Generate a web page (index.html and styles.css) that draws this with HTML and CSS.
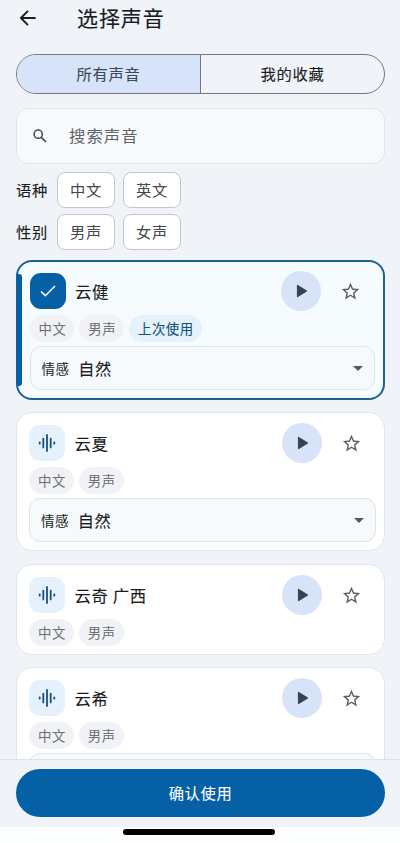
FILE: index.html
```html
<!DOCTYPE html>
<html lang="zh-CN">
<head>
<meta charset="utf-8">
<meta name="viewport" content="width=device-width, initial-scale=1">
<title>选择声音</title>
<link rel="stylesheet" href="styles.css">
</head>
<body>
<svg class="defs" aria-hidden="true">
  <symbol id="wave" viewBox="0 0 18 18"><path d="M1.7 8.3v1.4M5.3 4.6v8.8M9 1v16M12.7 4.6v8.8M16.3 8.3v1.4" fill="none" stroke="currentColor" stroke-width="1.8" stroke-linecap="round"/></symbol>
  <symbol id="play" viewBox="0 0 12 14"><path d="M1.4 1.2 10.8 7 1.4 12.8Z" fill="currentColor" stroke="currentColor" stroke-width="1" stroke-linejoin="round"/></symbol>
  <symbol id="star" viewBox="0 0 24 24"><path d="m22 9.24-7.19-.62L12 2 9.19 8.63 2 9.24l5.46 4.73L5.82 21 12 17.27 18.18 21l-1.63-7.03L22 9.24ZM12 15.4l-3.76 2.27 1-4.28-3.32-2.88 4.38-.38L12 6.1l1.71 4.04 4.38.38-3.32 2.88 1 4.28L12 15.4Z" fill="currentColor"/></symbol>
</svg>
<div class="screen">
  <header class="header">
    <svg class="back" viewBox="0 0 16 16"><path d="M15.6 8H1.2M8 .9.9 8 8 15.1" fill="none" stroke="currentColor" stroke-width="1.9"/></svg>
    <h1 class="title">选择声音</h1>
  </header>
  <main class="content">
    <div class="segments">
      <button class="segment segment-on">所有声音</button>
      <button class="segment">我的收藏</button>
    </div>
    <div class="search">
      <svg class="search-icon" viewBox="0 0 14 14"><circle cx="5.2" cy="5.2" r="4.1" fill="none" stroke="currentColor" stroke-width="1.5"/><path d="m8.3 8.3 4.7 4.7" stroke="currentColor" stroke-width="1.7"/></svg>
      <span>搜索声音</span>
    </div>
    <div class="filters">
      <div class="filter"><span class="filter-label">语种</span><button class="chip">中文</button><button class="chip">英文</button></div>
      <div class="filter"><span class="filter-label">性别</span><button class="chip">男声</button><button class="chip">女声</button></div>
    </div>
    <div class="list">
      <article class="card card-on">
        <div class="row">
          <span class="avatar avatar-on"><svg class="check" viewBox="0 0 16 12"><path d="m1 6.5 4.4 4.2L15 1" fill="none" stroke="currentColor" stroke-width="1.6"/></svg></span>
          <span class="name">云健</span>
          <button class="play"><svg><use href="#play"/></svg></button>
          <svg class="star"><use href="#star"/></svg>
        </div>
        <div class="tags"><span class="tag">中文</span><span class="tag">男声</span><span class="tag tag-last">上次使用</span></div>
        <div class="select"><span class="select-label">情感</span><span class="select-value">自然</span><span class="caret"></span></div>
      </article>
      <article class="card">
        <div class="row">
          <span class="avatar"><svg class="wave"><use href="#wave"/></svg></span>
          <span class="name">云夏</span>
          <button class="play"><svg><use href="#play"/></svg></button>
          <svg class="star"><use href="#star"/></svg>
        </div>
        <div class="tags"><span class="tag">中文</span><span class="tag">男声</span></div>
        <div class="select"><span class="select-label">情感</span><span class="select-value">自然</span><span class="caret"></span></div>
      </article>
      <article class="card card-short">
        <div class="row">
          <span class="avatar"><svg class="wave"><use href="#wave"/></svg></span>
          <span class="name">云奇 广西</span>
          <button class="play"><svg><use href="#play"/></svg></button>
          <svg class="star"><use href="#star"/></svg>
        </div>
        <div class="tags"><span class="tag">中文</span><span class="tag">男声</span></div>
      </article>
      <article class="card">
        <div class="row">
          <span class="avatar"><svg class="wave"><use href="#wave"/></svg></span>
          <span class="name">云希</span>
          <button class="play"><svg><use href="#play"/></svg></button>
          <svg class="star"><use href="#star"/></svg>
        </div>
        <div class="tags"><span class="tag">中文</span><span class="tag">男声</span></div>
        <div class="select"></div>
      </article>
    </div>
  </main>
  <footer class="footer"><button class="confirm">确认使用</button></footer>
  <div class="home"><span class="home-bar"></span></div>
</div>
</body>
</html>
```
FILE: styles.css
```css
* { box-sizing: border-box; }
body {
  margin: 0;
  font-family: "Noto Sans CJK SC", sans-serif;
  color: #191c20;
  background: #f0f3f8;
}
button { margin: 0; padding: 0; border: 0; background: none; font: inherit; color: inherit; letter-spacing: inherit; }
svg { display: block; flex: none; }
.defs { position: absolute; width: 0; height: 0; }
.screen { height: 843px; display: flex; flex-direction: column; overflow: hidden; }
.header { flex: none; height: 36px; padding-left: 20px; display: flex; align-items: center; }
.back { width: 16px; height: 16px; color: #191c20; }
.title { margin: -2px 0 0 41px; font-size: 21px; line-height: 30px; font-weight: 400; letter-spacing: 0.9px; -webkit-text-stroke-width: 0.15px; }
.content { flex: 1; min-height: 0; overflow: hidden; padding: 18px 15px 0 16px; }

.segments { height: 40px; display: flex; border: 1px solid #74777f; border-radius: 20px; overflow: hidden; font-size: 15.3px; letter-spacing: 0.7px; -webkit-text-stroke-width: 0.1px; }
.segment { flex: 1; padding-bottom: 2px; }
.segment-on { background: #d6e3f9; color: #3c475a; border-right: 1px solid #74777f; }

.search { height: 56px; margin-top: 14px; padding-left: 16px; display: flex; align-items: center; gap: 22px; border: 1px solid #dfe5e9; border-radius: 12px; background: #f6fafd; color: #5f6367; font-size: 16.4px; letter-spacing: 1px; }
.search span { padding-bottom: 2px; }
.search-icon { width: 14px; height: 14px; color: #43474b; }

.filters { margin-top: 8px; display: grid; gap: 6px; }
.filter { height: 36px; display: flex; align-items: center; gap: 8px; font-size: 15.3px; letter-spacing: 0.6px; }
.filter-label { width: 33px; padding-bottom: 2px; white-space: nowrap; -webkit-text-stroke-width: 0.12px; }
.chip { width: 58px; height: 36px; padding-bottom: 2px; border: 1px solid #c3c6cb; border-radius: 8px; background: #fff; color: #43474e; }

.list { margin-top: 11px; display: grid; gap: 12px; }
.card { position: relative; padding: 12px 8px 8px 12px; border: 1px solid #e1e6eb; border-radius: 16px; background: #fff; }
.card-short { margin-top: 1px; }
.card-on { margin-top: -1px; padding: 11px 8px 8px 11.5px; border: 2px solid #1b6292; background: #f6fbfe; }
.card-on::before { content: ""; position: absolute; left: -1px; top: 12px; bottom: 12px; width: 5px; border-radius: 0 3px 3px 0; background: #0560a5; }
.row { height: 36px; display: flex; align-items: center; }
.avatar { width: 36px; height: 36px; border-radius: 11px; display: flex; align-items: center; justify-content: center; background: #e5f2fd; color: #1b5078; }
.avatar-on { background: #0560a5; color: #fff; }
.check { width: 16px; height: 12px; }
.wave { width: 18px; height: 18px; }
.name { flex: 1; margin-left: 9.5px; padding-bottom: 1px; font-size: 16.4px; line-height: 24px; letter-spacing: 0.6px; -webkit-text-stroke-width: 0.12px; }
.play { width: 40px; height: 40px; border-radius: 50%; display: flex; align-items: center; justify-content: center; background: #d6e3f8; color: #364152; }
.play svg { width: 12px; height: 14px; margin-left: 2px; }
.star { width: 21px; height: 21px; margin: 0 14px 0 19px; color: #5a5d61; }
.tags { height: 27px; margin-top: 6px; display: flex; gap: 5px; }
.tag { height: 27px; padding: 0 8px 0 9px; border-radius: 14px; background: #f0f2f5; color: #6b6f74; font-size: 13.4px; line-height: 27px; letter-spacing: 0.5px; white-space: nowrap; }
.tag-last { background: #e4f2fc; color: #12507a; -webkit-text-stroke-width: 0.12px; }
.select { height: 44px; margin-top: 4px; padding: 0 11px; display: flex; align-items: center; border: 1px solid #dbe6ec; border-radius: 11px; background: #f6fafd; }
.select-label { font-size: 13.5px; letter-spacing: 0.4px; }
.select-value { flex: 1; margin-left: 9px; font-size: 16.2px; letter-spacing: 0.5px; -webkit-text-stroke-width: 0.12px; }
.caret { border: 5px solid transparent; border-top-color: #55595d; border-bottom: 0; }

.footer { flex: none; height: 68px; padding: 9px 15px 0 16px; border-top: 1px solid #dfe3e8; }
.confirm { display: block; width: 100%; height: 48px; padding-bottom: 2px; border-radius: 24px; background: #0560a5; color: #fff; font-size: 15.3px; letter-spacing: 0.6px; -webkit-text-stroke-width: 0.1px; }
.home { flex: none; height: 16px; padding: 2px 0 0 123px; background: #fdfefe; }
.home-bar { display: block; width: 152px; height: 6px; border-radius: 3px; background: #000; }
```
